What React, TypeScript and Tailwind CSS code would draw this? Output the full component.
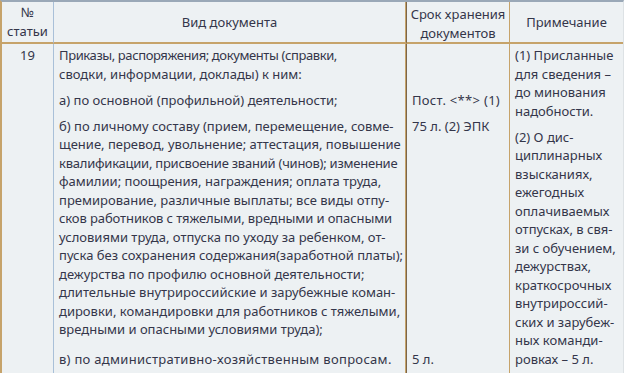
type Line = { t: string; c?: string };

const docLines: Line[][] = [
  [
    { t: 'Приказы, распоряжения; документы (справки,', c: 'tracking-[-0.4px]' },
    { t: 'сводки, информации, доклады) к ним:' },
  ],
  [{ t: 'а) по основной (профильной) деятельности;' }],
  [
    { t: 'б) по личному составу (прием, перемещение, совме-' },
    { t: 'щение, перевод, увольнение; аттестация, повышение' },
    { t: 'квалификации, присвоение званий (чинов); изменение', c: 'tracking-[-0.24px]' },
    { t: 'фамилии; поощрения, награждения; оплата труда,' },
    { t: 'премирование, различные выплаты; все виды отпу-' },
    { t: 'сков работников с тяжелыми, вредными и опасными', c: 'tracking-[-0.1px]' },
    { t: 'условиями труда, отпуска по уходу за ребенком, от-' },
    { t: 'пуска без сохранения содержания(заработной платы);' },
    { t: 'дежурства по профилю основной деятельности;' },
    { t: 'длительные внутрироссийские и зарубежные коман-' },
    { t: 'дировки, командировки для работников с тяжелыми,' },
    { t: 'вредными и опасными условиями труда);' },
  ],
];

const noteLines: Line[][] = [
  [{ t: '(1) Присланные' }, { t: 'для сведения –' }, { t: 'до минования' }, { t: 'надобности.' }],
  [
    { t: '(2) О дис-' },
    { t: 'циплинарных' },
    { t: 'взысканиях,' },
    { t: 'ежегодных' },
    { t: 'оплачиваемых' },
    { t: 'отпусках, в свя-' },
    { t: 'зи с обучением,' },
    { t: 'дежурствах,' },
    { t: 'краткосрочных' },
    { t: 'внутрироссий-' },
    { t: 'ских и зарубеж-' },
    { t: 'ных команди-' },
    { t: 'ровках – 5 л.' },
  ],
];

function Para({ lines, first }: { lines: Line[]; first?: boolean }) {
  return (
    <div className={first ? '' : 'mt-[7.5px]'}>
      {lines.map((l, i) => (
        <div key={i} className={'whitespace-nowrap ' + (l.c ?? '')}>{l.t}</div>
      ))}
    </div>
  );
}

export default function App() {
  return (
    <div
      className="w-[624px] h-[373px] bg-[#edf1f3] text-[#34364a] text-[13px] leading-[18.5px]"
      style={{ fontFamily: '"Noto Sans", "Open Sans", sans-serif' }}
    >
      <div className="border-t-2 border-t-[#9aa8b7] border-l-2 border-l-[#c6a36a] border-b-2 border-b-[#c6a36a] border-r border-r-[#dde2e5] grid grid-cols-[52px_352px_104px_1fr]">
        {/* header */}
        <div className="border-r border-r-[#a9c0d8] border-b-2 border-b-[#c6a36a] text-center pt-[1px] pb-[2px]">
          <div>№</div>
          <div>статьи</div>
        </div>
        <div className="border-r border-r-[#c6a36a] border-b-2 border-b-[#c6a36a] flex items-center justify-center">
          Вид документа
        </div>
        <div className="border-l border-l-[#7c6548] border-r border-r-[#c6a36a] border-b-2 border-b-[#c6a36a] text-center pt-[3px]">
          <div>Срок хранения</div>
          <div>документов</div>
        </div>
        <div className="border-b-2 border-b-[#c6a36a] flex items-center justify-center">
          Примечание
        </div>

        {/* body */}
        <div className="border-r border-r-[#a9c0d8] text-center pt-[2px]">19</div>
        <div className="border-r border-r-[#c6a36a] pl-[5px] pt-[2px] pb-[5px] flex flex-col">
          {docLines.map((p, i) => (
            <Para key={i} lines={p} first={i === 0} />
          ))}
          <div className="mt-auto whitespace-nowrap tracking-[0.3px]">в) по административно-хозяйственным вопросам.</div>
        </div>
        <div className="border-l border-l-[#7c6548] border-r border-r-[#c6a36a] pl-[5px] pt-[2px] pb-[5px] flex flex-col">
          <div className="h-[37px]" />
          <div className="mt-[7.5px] whitespace-nowrap tracking-[0.3px]">Пост. &lt;**&gt; (1)</div>
          <div className="mt-[7.5px] whitespace-nowrap">75 л. (2) ЭПК</div>
          <div className="mt-auto">5 л.</div>
        </div>
        <div className="pl-[5px] pt-[2px] pb-[5px]">
          {noteLines.map((p, i) => (
            <Para key={i} lines={p} first={i === 0} />
          ))}
        </div>
      </div>
    </div>
  );
}
